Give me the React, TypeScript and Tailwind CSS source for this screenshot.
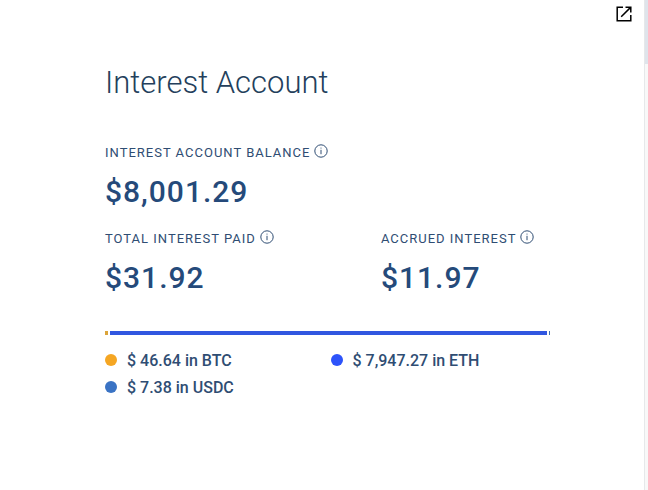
import type { ReactNode } from 'react';

interface Holding {
  symbol: string;
  amount: number;
  dot: string;
  bar: string;
}

const holdings: Holding[] = [
  { symbol: 'BTC', amount: 46.64, dot: 'bg-[#f5a623]', bar: 'bg-[#dba43a]' },
  { symbol: 'ETH', amount: 7947.27, dot: 'bg-[#2d53fa]', bar: 'bg-[#3157e0]' },
  { symbol: 'USDC', amount: 7.38, dot: 'bg-[#3a73c4]', bar: 'bg-[#3f6fae]' },
];

const formatAmount = (value: number) =>
  value.toLocaleString('en-US', { minimumFractionDigits: 2, maximumFractionDigits: 2 });

function InfoIcon() {
  return (
    <svg viewBox="0 0 14 14" className="size-3.5" fill="none" aria-hidden="true">
      <circle cx="7" cy="7" r="6.2" stroke="currentColor" strokeWidth="1" />
      <path d="M7 5.8v4.4" stroke="currentColor" strokeWidth="1" />
      <circle cx="7" cy="4" r="0.6" fill="currentColor" />
    </svg>
  );
}

function OpenIcon() {
  return (
    <svg viewBox="0 0 16 16" className="size-4" fill="none" stroke="currentColor" aria-hidden="true">
      <path d="M7 1.2H1.2v13.6h13.6V9" strokeWidth="1.5" />
      <path d="M9.5 1.2h5.3v5.3M14.6 1.4L5.2 10.8" strokeWidth="1.5" />
    </svg>
  );
}

function Stat({ label, children }: { label: string; children: ReactNode }) {
  return (
    <div>
      <div className="flex h-5 items-start gap-1">
        <span className="text-[13px] leading-5 tracking-[1px] whitespace-nowrap uppercase">{label}</span>
        <button type="button" aria-label={`About ${label}`} className="pt-px">
          <InfoIcon />
        </button>
      </div>
      <p className="mt-[9px] text-[30px] leading-10 font-medium tracking-[1px] text-[#254a7a]">{children}</p>
    </div>
  );
}

export default function App() {
  return (
    <div className="flex min-h-screen bg-white font-[Roboto,sans-serif] text-[#2f4d73]">
      <main className="relative flex-1 pt-[65px] pr-[94px] pl-[105px]">
        <button
          type="button"
          aria-label="Open in new window"
          className="absolute top-1.5 right-3 text-black"
        >
          <OpenIcon />
        </button>

        <h1 className="text-[31px] leading-9 font-light text-[#243f5c]">Interest Account</h1>

        <section className="mt-[42px] grid grid-cols-[62fr_38fr] gap-y-[17px]">
          <div className="col-span-2">
            <Stat label="Interest Account Balance">$8,001.29</Stat>
          </div>
          <Stat label="Total Interest Paid">$31.92</Stat>
          <Stat label="Accrued Interest">$11.97</Stat>
        </section>

        <div className="mt-[33px] flex h-1 gap-0.5">
          {holdings.map((h) => (
            <div
              key={h.symbol}
              className={`min-w-px basis-0 ${h.bar}`}
              style={{ flexGrow: h.amount }}
            />
          ))}
        </div>

        <ul className="mt-3.5 grid grid-cols-2 gap-x-1.5 gap-y-[3px]">
          {holdings.map((h) => (
            <li key={h.symbol} className="flex h-6 items-start gap-2.5">
              <span className={`mt-[5px] size-3 shrink-0 rounded-full ${h.dot}`} />
              <span className="text-base font-medium whitespace-nowrap">
                $ {formatAmount(h.amount)} in {h.symbol}
              </span>
            </li>
          ))}
        </ul>
      </main>

      {/* scroll track */}
      <div className="w-1 shrink-0 border-l border-[#e6e8ea] bg-[#f8f8f8]">
        <div className="h-16 bg-[#dfe4eb]" />
      </div>
    </div>
  );
}
